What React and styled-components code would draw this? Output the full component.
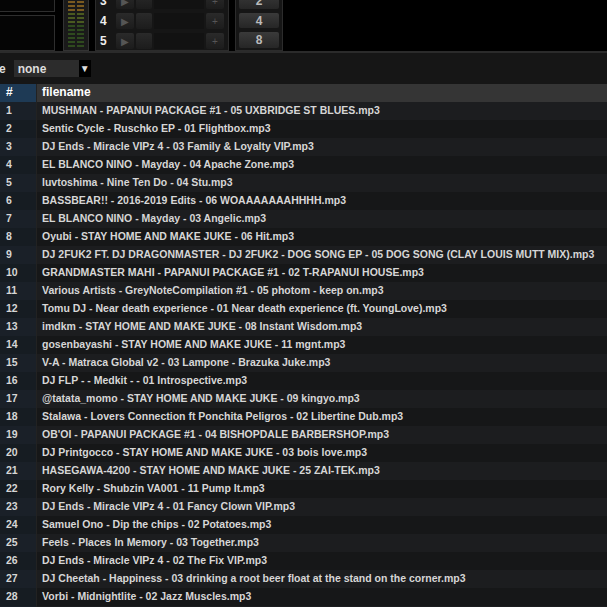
import React from "react";
import styled, { createGlobalStyle } from "styled-components";

const G = createGlobalStyle`
body{margin:0;background:#121314;font-family:"Liberation Sans",Arial,sans-serif;overflow:hidden;}
`;
const Top = styled.div`height:51px;background:#000;display:flex;border-bottom:2px solid #2b2b2b;overflow:hidden;`;
const LeftPanel = styled.div`width:55px;display:flex;flex-direction:column;gap:3px;margin-top:-4px;`;
const LBox = styled.div`height:${p=>p.h}px;border:1px solid #2e2e2e;border-left:none;background:#050505;`;
const Meter = styled.div`width:24px;margin:-2px 0 0 8px;background:#1a1a1a;border:1px solid #333;display:flex;gap:2px;justify-content:center;padding-top:2px;`;
const MCol = styled.div`display:flex;flex-direction:column;gap:2px;`;
const Seg = styled.div`width:7px;height:2px;background:${p=>p.c};`;
const RowsPanel = styled.div`width:124px;margin:-10px 0 0 6px;background:#161616;border:1px solid #2c2c2c;display:flex;flex-direction:column;gap:4px;padding:2px 4px;`;
const SRow = styled.div`display:flex;align-items:center;gap:2px;height:16px;`;
const Num = styled.span`color:#eee;font-weight:bold;font-size:12px;width:14px;`;
const Btn = styled.div`width:${p=>p.w}px;height:16px;background:linear-gradient(#2a2a2a,#1c1c1c);border-radius:2px;color:#555;font-size:10px;display:flex;align-items:center;justify-content:center;`;
const Slot = styled.div`flex:1;height:16px;background:#121212;`;
const BtnCol = styled.div`width:40px;margin:-10px 0 0 6px;background:#161616;border:1px solid #2c2c2c;display:flex;flex-direction:column;gap:4px;padding:2px 3px;`;
const NBtn = styled.div`height:16px;background:linear-gradient(#3a3a3a,#262626);border-radius:2px;color:#bbb;font-size:12px;font-weight:bold;display:flex;align-items:center;justify-content:center;`;
const Filter = styled.div`height:31px;background:#161616;display:flex;align-items:center;gap:2px;`;
const Lbl = styled.span`color:#ddd;font-size:12px;font-weight:bold;margin-left:-1px;`;
const Drop = styled.div`width:77px;height:17px;background:#2c2c2c;display:flex;align-items:center;justify-content:space-between;color:#ddd;font-size:12px;font-weight:bold;padding-left:4px;box-sizing:border-box;margin-left:6px;`;
const Arrow = styled.div`width:12px;height:17px;background:#000;color:#ddd;font-size:10px;display:flex;align-items:center;justify-content:center;`;
const Table = styled.div`display:grid;grid-template-columns:37px 1fr;font-weight:bold;color:#d6d6d6;`;
const Cell = styled.div`height:18px;line-height:17px;padding-left:${p=>p.num?6:5}px;white-space:nowrap;overflow:hidden;background:${p=>p.head?(p.num?"#1e3a55":"#353535"):p.num?(p.alt?"#161c22":"#1a2028"):(p.alt?"#161718":"#1c1d1f")};color:${p=>p.head?"#fff":"#d6d6d6"};${p=>p.num?"border-right:1px solid #222;":""}font-size:${p=>p.head?12:10.5}px;`;

const files = [
"MUSHMAN - PAPANUI PACKAGE #1 - 05 UXBRIDGE ST BLUES.mp3",
"Sentic Cycle - Ruschko EP - 01 Flightbox.mp3",
"DJ Ends - Miracle VIPz 4 - 03 Family & Loyalty VIP.mp3",
"EL BLANCO NINO - Mayday - 04 Apache Zone.mp3",
"luvtoshima - Nine Ten Do - 04 Stu.mp3",
"BASSBEAR!! - 2016-2019 Edits - 06 WOAAAAAAAHHHH.mp3",
"EL BLANCO NINO - Mayday - 03 Angelic.mp3",
"Oyubi - STAY HOME AND MAKE JUKE - 06 Hit.mp3",
"DJ 2FUK2 FT. DJ DRAGONMASTER - DJ 2FUK2 - DOG SONG EP - 05 DOG SONG (CLAY LOUIS MUTT MIX).mp3",
"GRANDMASTER MAHI - PAPANUI PACKAGE #1 - 02 T-RAPANUI HOUSE.mp3",
"Various Artists - GreyNoteCompilation #1 - 05 photom - keep on.mp3",
"Tomu DJ - Near death experience - 01 Near death experience (ft. YoungLove).mp3",
"imdkm - STAY HOME AND MAKE JUKE - 08 Instant Wisdom.mp3",
"gosenbayashi - STAY HOME AND MAKE JUKE - 11 mgnt.mp3",
"V-A - Matraca Global v2 - 03 Lampone - Brazuka Juke.mp3",
"DJ FLP - - Medkit - - 01 Introspective.mp3",
"@tatata_momo - STAY HOME AND MAKE JUKE - 09 kingyo.mp3",
"Stalawa - Lovers Connection ft Ponchita Peligros - 02 Libertine Dub.mp3",
"OB'OI - PAPANUI PACKAGE #1 - 04 BISHOPDALE BARBERSHOP.mp3",
"DJ Printgocco - STAY HOME AND MAKE JUKE - 03 bois love.mp3",
"HASEGAWA-4200 - STAY HOME AND MAKE JUKE - 25 ZAI-TEK.mp3",
"Rory Kelly - Shubzin VA001 - 11 Pump It.mp3",
"DJ Ends - Miracle VIPz 4 - 01 Fancy Clown VIP.mp3",
"Samuel Ono - Dip the chips - 02 Potatoes.mp3",
"Feels - Places In Memory - 03 Together.mp3",
"DJ Ends - Miracle VIPz 4 - 02 The Fix VIP.mp3",
"DJ Cheetah - Happiness - 03 drinking a root beer float at the stand on the corner.mp3",
"Vorbi - Midnightlite - 02 Jazz Muscles.mp3",
"",
];

const segColor = i => i < 3 ? "#7a5a20" : i < 6 ? "#4a5a20" : "#2f4a1e";

export default function App(){
  return <>
    <G/>
    <Top>
      <LeftPanel><LBox h={14}/><LBox h={34}/></LeftPanel>
      <Meter>{[0,1].map(c=><MCol key={c}>{Array.from({length:12},(_,i)=><Seg key={i} c={segColor(i)}/>)}</MCol>)}</Meter>
      <RowsPanel>{[3,4,5].map(n=><SRow key={n}><Num>{n}</Num><Btn w={18}>▶</Btn><Btn w={16}/><Slot/><Btn w={18}>+</Btn></SRow>)}</RowsPanel>
      <BtnCol>{[2,4,8].map(n=><NBtn key={n}>{n}</NBtn>)}</BtnCol>
    </Top>
    <Filter><Lbl>e</Lbl><Drop>none<Arrow>▼</Arrow></Drop></Filter>
    <Table>
      <Cell head num>#</Cell><Cell head>filename</Cell>
      {files.map((f,i)=><React.Fragment key={i}>
        <Cell num alt={i%2}>{f?i+1:""}</Cell><Cell alt={i%2}>{f}</Cell>
      </React.Fragment>)}
    </Table>
  </>;
}
